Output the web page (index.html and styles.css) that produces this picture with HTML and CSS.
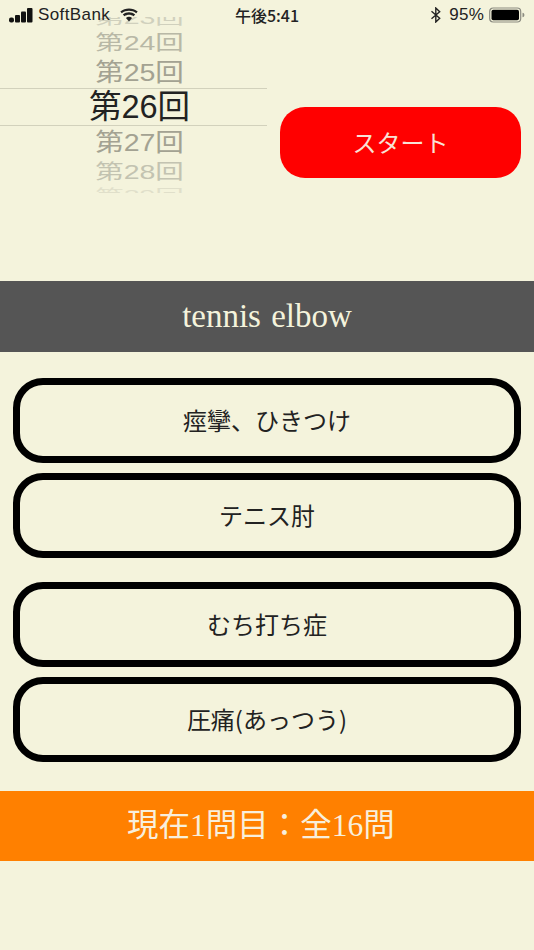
FILE: index.html
```html
<!DOCTYPE html>
<html lang="ja">
<head>
<meta charset="utf-8">
<title>tennis elbow</title>
<link rel="stylesheet" href="styles.css">
</head>
<body>
<div class="screen">
  <div class="status">
    <div class="status-left">
      <svg class="signal" width="24" height="15" viewBox="0 0 24 15"><rect x="0" y="9.500" width="5" height="5" rx="2"/><rect x="6" y="7" width="5" height="7.500" rx="1"/><rect x="12" y="3.500" width="5" height="11" rx="1"/><rect x="18" y="0" width="5.500" height="14.500" rx="1"/></svg>
      <span class="carrier">SoftBank</span>
      <svg class="wifi" width="18" height="14" viewBox="0 0 18 14"><path d="M9 13.500 5.900 9.900C7.700 8.500 10.300 8.500 12.100 9.900Z"/><path d="M4.500 8.300 2.800 6.400C6.400 3.500 11.600 3.500 15.200 6.400L13.500 8.300C10.900 6.300 7.100 6.300 4.500 8.300Z"/><path d="M1.800 5.200 0.300 3.400C5.300-0.600 12.700-0.600 17.700 3.400L16.200 5.200C12 2 6 2 1.800 5.200Z"/></svg>
    </div>
    <span class="clock">午後5:41</span>
    <div class="status-right">
      <svg class="bt" width="12" height="16" viewBox="0 0 12 16"><path d="M1.500 4.300 9.700 11.300 5.800 15V1L9.700 4.700 1.500 11.700" fill="none" stroke="#222" stroke-width="1.400"/></svg>
      <span class="percent">95%</span>
      <svg class="battery" width="36" height="16" viewBox="0 0 36 16"><rect x="0.700" y="1" width="31" height="14" rx="3.500" fill="none" stroke="#8b8b80" stroke-width="1.200"/><rect x="2.500" y="2.800" width="27.500" height="10.400" rx="1.800" fill="#000"/><path d="M33.500 5.800C34.800 6 35.400 7 35.400 8S34.800 10 33.500 10.200Z" fill="#8b8b80"/></svg>
    </div>
  </div>

  <section class="top">
    <div class="picker">
      <div class="row row-23"><span class="label label-far">第23回</span></div>
      <div class="row row-24"><span class="label label-far">第24回</span></div>
      <div class="row row-25"><span class="label label-near">第25回</span></div>
      <div class="row row-26"><span class="label label-current">第26回</span></div>
      <div class="row row-27"><span class="label label-near">第27回</span></div>
      <div class="row row-28"><span class="label label-far">第28回</span></div>
      <div class="row row-29"><span class="label label-edge">第29回</span></div>
    </div>
    <button class="start">スタート</button>
  </section>

  <h1 class="question">tennis elbow</h1>

  <section class="answers">
    <div class="pair">
      <button class="answer">痙攣、ひきつけ</button>
      <button class="answer">テニス肘</button>
    </div>
    <div class="pair">
      <button class="answer">むち打ち症</button>
      <button class="answer">圧痛(あっつう)</button>
    </div>
  </section>

  <div class="progress">現在1問目：全16問</div>
</div>
</body>
</html>
```
FILE: styles.css
```css
* { box-sizing: border-box; }
html, body { margin: 0; padding: 0; }
body {
  width: 534px;
  height: 950px;
  overflow: hidden;
  background: #f4f3dc;
  font-family: "Noto Sans CJK JP", sans-serif;
  color: #222;
}
.screen { position: relative; width: 534px; height: 950px; }

.status {
  position: absolute;
  top: 0;
  left: 0;
  right: 0;
  height: 30px;
  display: flex;
  align-items: center;
  justify-content: space-between;
  padding: 0 9px 0 9px;
  font-family: "Liberation Sans", sans-serif;
  font-size: 17px;
  color: #222;
  z-index: 2;
}
.status-left, .status-right { display: flex; align-items: center; width: 170px; }
.status-right { justify-content: flex-end; }
.signal { fill: #111; margin-right: 5px; }
.carrier { letter-spacing: 0.4px; }
.wifi { fill: #222; margin-left: 10px; }
.clock { font-family: "Noto Sans CJK JP", sans-serif; font-size: 16px; font-weight: 500; color: #222; }
.bt { margin-right: 7px; }
.percent { margin-right: 5px; letter-spacing: 0.2px; }

.top {
  height: 281px;
  display: flex;
  align-items: flex-start;
}
.picker {
  width: 267px;
  height: 176px;
  margin-top: 17px;
  overflow: hidden;
  flex: none;
}
.row {
  display: flex;
  align-items: center;
  justify-content: center;
  white-space: nowrap;
  padding-left: 12px;
}
.row-23 { height: 12px; }
.row-24 { height: 28px; }
.row-25 { height: 31px; }
.row-26 { height: 38px; border-top: 1px solid #d2d1bc; border-bottom: 1px solid #d2d1bc; }
.row-27 { height: 32px; }
.row-28 { height: 28px; }
.row-29 { height: 14px; }
.label {
  display: block;
  font-family: "Liberation Sans", "Noto Sans CJK JP", sans-serif;
  font-size: 28.500px;
  line-height: 1;
}
.row-23 .label { transform: translateY(-5px) scaleY(0.55); color: #d0d0bd; }
.label-far { transform: scaleY(0.72); color: #b8b8a6; }
.label-near { transform: scaleY(0.86); color: #a3a292; }
.label-current { font-size: 32.500px; color: #222; }
.row-28 .label { color: #c3c3b1; }
.label-edge { transform: translateY(2px) scaleY(0.5); color: #e0dfca; }

.start {
  flex: none;
  width: 241px;
  height: 71px;
  margin: 107px 0 0 13px;
  border: 0;
  border-radius: 25px;
  background: #ff0000;
  color: #f8e3d6;
  font: 400 24px "Noto Sans CJK JP", sans-serif;
  padding: 0 0 3px;
}

.question {
  margin: 0;
  height: 71px;
  background: #555555;
  color: #f4f3dc;
  font: 400 33px/71px "Liberation Serif", "Noto Sans CJK JP", serif;
  word-spacing: 2px;
  text-align: center;
}

.answers {
  padding: 26px 13px 0;
  display: flex;
  flex-direction: column;
  gap: 24px;
}
.pair { display: flex; flex-direction: column; gap: 10px; }
.answer {
  display: block;
  width: 508px;
  height: 85px;
  border: 7px solid #000;
  border-radius: 30px;
  background: transparent;
  color: #222;
  font: 400 24px "Noto Sans CJK JP", sans-serif;
  padding: 0 0 3px;
}

.progress {
  margin-top: 29px;
  height: 70px;
  padding-right: 12px;
  background: #ff8000;
  color: #f8efdc;
  font: 400 31.500px/70px "Liberation Serif", "Noto Sans CJK JP", serif;
  text-align: center;
}
```
